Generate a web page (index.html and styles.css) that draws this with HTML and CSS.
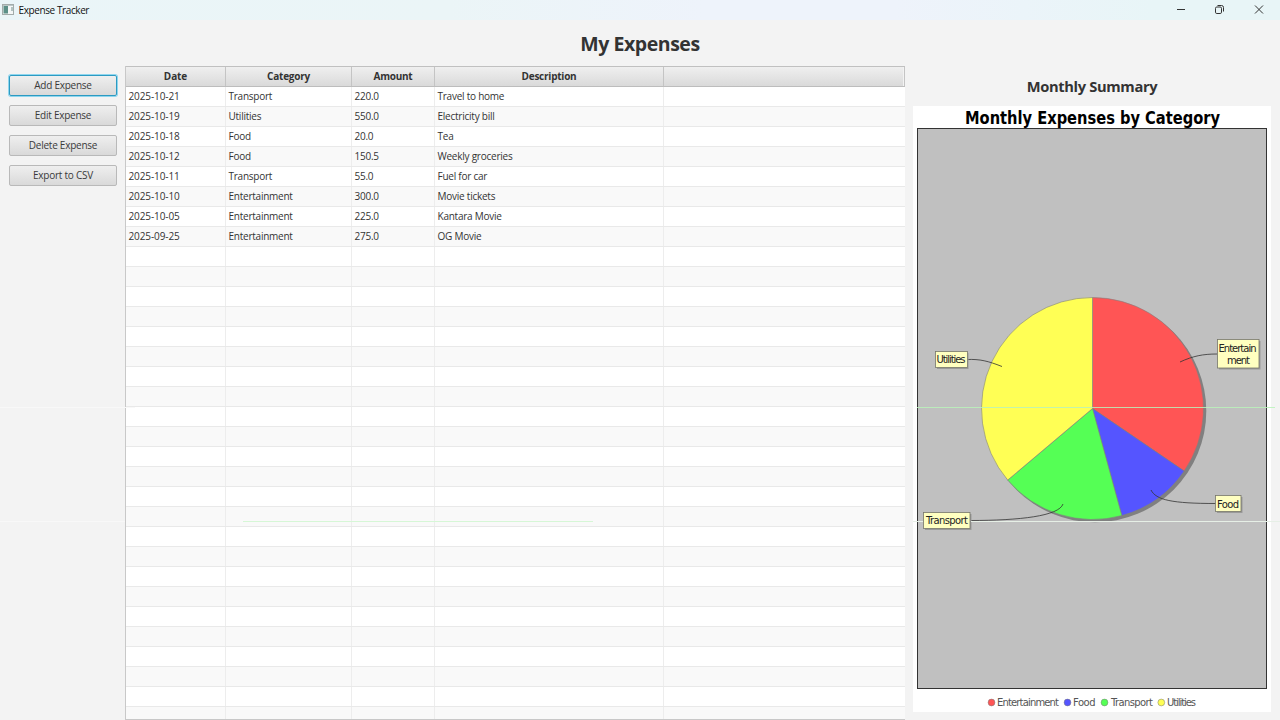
FILE: index.html
```html
<!DOCTYPE html>
<html lang="en">
<head>
<meta charset="utf-8">
<title>Expense Tracker</title>
<link rel="stylesheet" href="styles.css">
</head>
<body>
<div class="window">
  <header class="titlebar">
    <svg class="app-icon" width="12" height="11" viewBox="0 0 12 11"><rect x=".5" y=".5" width="11" height="10" fill="#f4f7f7" stroke="#a3acab"/><rect x="1.500" y="2" width="4.500" height="7.500" fill="#5b9088"/><rect x="1" y="1" width="10" height="1" fill="#b9c7c7"/><path d="M10 3v4" stroke="#6f8f8b"/></svg>
    <span class="app-name">Expense Tracker</span>
    <svg class="win-buttons" width="100" height="20" viewBox="0 0 100 20" fill="none" stroke="#333" stroke-width="1"><path d="M7 9.5h8"/><rect x="45.500" y="7" width="6" height="6.500" rx="1.300"/><path d="M47.500 5.500h4q2 0 2 2v4"/><path d="M85 5.500l8 8M93 5.500l-8 8"/></svg>
  </header>
  <h1 class="heading">My Expenses</h1>
  <main class="content">
    <nav class="actions">
      <button class="btn focused">Add Expense</button>
      <button class="btn">Edit Expense</button>
      <button class="btn">Delete Expense</button>
      <button class="btn">Export to CSV</button>
    </nav>
    <section class="table">
      <div class="row head"><span>Date</span><span>Category</span><span>Amount</span><span>Description</span><span></span></div>
      <div class="row"><span>2025-10-21</span><span>Transport</span><span>220.0</span><span>Travel to home</span><span></span></div>
      <div class="row"><span>2025-10-19</span><span>Utilities</span><span>550.0</span><span>Electricity bill</span><span></span></div>
      <div class="row"><span>2025-10-18</span><span>Food</span><span>20.0</span><span>Tea</span><span></span></div>
      <div class="row"><span>2025-10-12</span><span>Food</span><span>150.5</span><span>Weekly groceries</span><span></span></div>
      <div class="row"><span>2025-10-11</span><span>Transport</span><span>55.0</span><span>Fuel for car</span><span></span></div>
      <div class="row"><span>2025-10-10</span><span>Entertainment</span><span>300.0</span><span>Movie tickets</span><span></span></div>
      <div class="row"><span>2025-10-05</span><span>Entertainment</span><span>225.0</span><span>Kantara Movie</span><span></span></div>
      <div class="row"><span>2025-09-25</span><span>Entertainment</span><span>275.0</span><span>OG Movie</span><span></span></div>
      <div class="row"><span></span><span></span><span></span><span></span><span></span></div>
      <div class="row"><span></span><span></span><span></span><span></span><span></span></div>
      <div class="row"><span></span><span></span><span></span><span></span><span></span></div>
      <div class="row"><span></span><span></span><span></span><span></span><span></span></div>
      <div class="row"><span></span><span></span><span></span><span></span><span></span></div>
      <div class="row"><span></span><span></span><span></span><span></span><span></span></div>
      <div class="row"><span></span><span></span><span></span><span></span><span></span></div>
      <div class="row"><span></span><span></span><span></span><span></span><span></span></div>
      <div class="row"><span></span><span></span><span></span><span></span><span></span></div>
      <div class="row"><span></span><span></span><span></span><span></span><span></span></div>
      <div class="row"><span></span><span></span><span></span><span></span><span></span></div>
      <div class="row"><span></span><span></span><span></span><span></span><span></span></div>
      <div class="row"><span></span><span></span><span></span><span></span><span></span></div>
      <div class="row"><span></span><span></span><span></span><span></span><span></span></div>
      <div class="row"><span></span><span></span><span></span><span></span><span></span></div>
      <div class="row"><span></span><span></span><span></span><span></span><span></span></div>
      <div class="row"><span></span><span></span><span></span><span></span><span></span></div>
      <div class="row"><span></span><span></span><span></span><span></span><span></span></div>
      <div class="row"><span></span><span></span><span></span><span></span><span></span></div>
      <div class="row"><span></span><span></span><span></span><span></span><span></span></div>
      <div class="row"><span></span><span></span><span></span><span></span><span></span></div>
      <div class="row"><span></span><span></span><span></span><span></span><span></span></div>
      <div class="row"><span></span><span></span><span></span><span></span><span></span></div>
      <div class="row"><span></span><span></span><span></span><span></span><span></span></div>
    </section>
    <aside class="summary">
      <h2 class="summary-title">Monthly Summary</h2>
      <svg class="chart" width="358" height="606" viewBox="913 106 358 606">
        <rect x="913" y="106" width="358" height="606" fill="#fff"/>
        <text class="chart-title" x="965" y="123.500" textLength="255" lengthAdjust="spacingAndGlyphs">Monthly Expenses by Category</text>
        <rect x="917.5" y="128.500" width="349" height="560" fill="#c0c0c0" stroke="#333"/>
        <circle cx="1095" cy="411" r="111.300" fill="#808080"/>
        <g stroke="#808080" stroke-width=".6">
          <path d="M1092.500 408.500V297.500A111 111 0 0 1 1184.200 471.100Z" fill="#f55"/>
          <path d="M1092.500 408.500L1184.200 471.100A111 111 0 0 1 1121.800 515.600Z" fill="#55f"/>
          <path d="M1092.500 408.500L1121.800 515.600A111 111 0 0 1 1007.700 480.100Z" fill="#5f5"/>
          <path d="M1092.500 408.500L1007.700 480.100A111 111 0 0 1 1092.500 297.500Z" fill="#ff5"/>
        </g>
        <g fill="none" stroke="#333" stroke-width=".8">
          <path d="M967 359.500C980 359 988 361 1002 366.500"/>
          <path d="M1217 354C1203 354 1193 356 1180 362"/>
          <path d="M1151 490C1156 500 1172 503.500 1216 503.500"/>
          <path d="M970 520.500C1020 520.500 1059 516 1063 504"/>
        </g>
        <g fill="#999"><rect x="937" y="353" width="31.500" height="16"/><rect x="1219" y="341" width="41.500" height="28.500"/><rect x="1217" y="497" width="25.500" height="16"/><rect x="925" y="514" width="46.500" height="16"/></g>
        <g fill="#ffffc0" stroke="#77776a" stroke-width=".8"><rect x="935.500" y="351.500" width="32" height="16"/><rect x="1217.500" y="339.500" width="41.500" height="28.500"/><rect x="1215.500" y="495.500" width="25.500" height="16"/><rect x="923.500" y="512.500" width="46.500" height="16"/></g>
        <g class="chart-text">
          <text x="936.500" y="363" textLength="29">Utilities</text>
          <text x="1218.500" y="351.500" textLength="38">Entertain</text>
          <text x="1227" y="364" textLength="23">ment</text>
          <text x="1217" y="507.500" textLength="22">Food</text>
          <text x="926" y="524" textLength="42">Transport</text>
        </g>
        <g stroke="#777" stroke-width=".5"><circle cx="991.500" cy="702.500" r="3.400" fill="#f55"/><circle cx="1067.500" cy="702.500" r="3.400" fill="#55f"/><circle cx="1104.500" cy="702.500" r="3.400" fill="#5f5"/><circle cx="1161.300" cy="702.500" r="3.400" fill="#ff5"/></g>
        <g class="chart-text legend">
          <text x="997" y="706" textLength="62">Entertainment</text>
          <text x="1073" y="706" textLength="22.500">Food</text>
          <text x="1111" y="706" textLength="42">Transport</text>
          <text x="1167" y="706" textLength="29">Utilities</text>
        </g>
      </svg>
    </aside>
  </main>
  <svg class="scanlines" width="1280" height="720" viewBox="0 0 1280 720"><path d="M0 407.500H135M0 521.500H125" stroke="#f8f8f8"/><path d="M917 407.500H1275" stroke="#baf2ba" stroke-opacity=".85"/><path d="M243 521.500H593" stroke="#d6f7d6"/><path d="M913 521.500H923M971 521.500H1280" stroke="#e6efe6"/></svg>
</div>
</body>
</html>
```
FILE: styles.css
```css
* { box-sizing: border-box; }
body { margin: 0; background: #f3f3f3; color: #333; font: 10px/1 "Open Sans", "Noto Sans", sans-serif; overflow: hidden; }
.window { position: relative; display: flex; flex-direction: column; width: 1280px; height: 720px; overflow: hidden; }
.titlebar { display: flex; align-items: center; flex: none; height: 20px; padding-left: 2px; background: linear-gradient(90deg, #eaf5f8 0%, #ebf5f7 35%, #eef3fb 55%, #eef3fb 70%, #e8f5f7 90%); color: #111; }
.app-icon { margin-top: -1px; }
.app-name { margin-left: 4.500px; letter-spacing: -.4px; }
.win-buttons { margin-left: auto; margin-right: 10px; }
.heading { flex: none; height: 46px; margin: 0; font-size: 19.500px; line-height: 47px; font-weight: 700; text-align: center; letter-spacing: -.45px; }
.content { display: grid; grid-template-columns: 125px 780px 375px; flex: none; height: 654px; }
.actions { display: flex; flex-direction: column; gap: 9px; padding: 9px 8px 0 9px; }
.btn { height: 21px; margin: 0; padding: 0; border: 1px solid #b9b9b9; border-radius: 2px; background: linear-gradient(#efefef, #d9d9d9); color: #3a3a3a; font: 10px/17px "Open Sans", "Noto Sans", sans-serif; letter-spacing: -.25px; }
.focused { border-color: #2c9ac2; box-shadow: 0 0 0 1px #8fd6ee; }
.table { border-left: 1px solid #c8c8c8; border-bottom: 1px solid #c8c8c8; background: #fff; overflow: hidden; }
.row { display: grid; grid-template-columns: 100px 126px 83px 229px 241px; height: 20px; border-bottom: 1px solid #e9e9e9; background: #fff; }
.row:nth-child(odd) { background: #f9f9f9; }
.row span { padding-left: 2.500px; border-right: 1px solid #ededed; line-height: 19px; letter-spacing: -.24px; white-space: nowrap; }
.row span:last-child { border-right: 0; }
.row span:first-child { letter-spacing: -.1px; }
.row.head { height: 21px; border-top: 1px solid #c0c0c0; border-bottom: 1px solid #bdbdbd; background: linear-gradient(#efefef, #dadada); }
.row.head span { padding: 0; border-right: 1px solid #c4c4c4; text-align: center; font-weight: 700; line-height: 19px; }
.row.head span:last-child { box-shadow: inset -1px 0 #f3f3f3; }
.summary { display: flex; flex-direction: column; padding-left: 8px; }
.summary-title { flex: none; width: 358px; height: 40px; margin: 0; font-size: 14.700px; line-height: 40px; text-align: center; letter-spacing: -.35px; }
.chart { display: block; flex: none; }
.chart-title { font: 700 17px "DejaVu Sans Condensed", "DejaVu Sans", sans-serif; fill: #000; }
.chart-text { font: 10px "DejaVu Sans", sans-serif; fill: #222; }
.legend { fill: #555; }
.scanlines { position: absolute; left: 0; top: 0; pointer-events: none; }
```
